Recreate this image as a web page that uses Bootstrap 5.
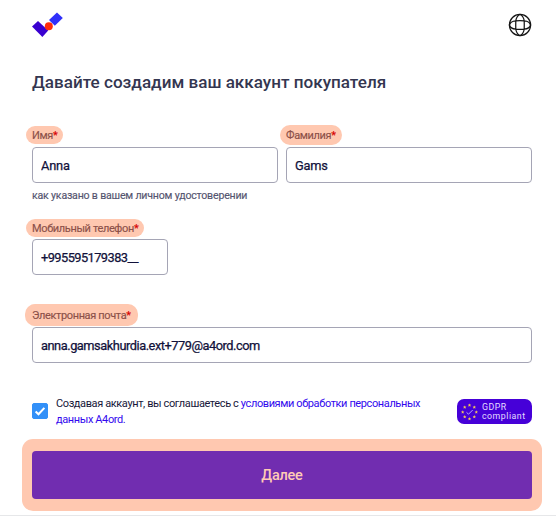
<!DOCTYPE html>
<html lang="ru">
<head>
<meta charset="utf-8">
<meta name="viewport" content="width=device-width, initial-scale=1">
<title>A4ord</title>
<link href="https://cdn.jsdelivr.net/npm/bootstrap@5.3.0/dist/css/bootstrap.min.css" rel="stylesheet">
<style>
body{font-family:Roboto,"Liberation Sans",sans-serif;background:#fff;color:#17173a;overflow:hidden}
.page{height:516px;padding:0 24px 0 32px;border-bottom:1px solid #e6e7e9}
.top{height:50px;padding-top:12px}
.logo{display:block}
.title{font-size:17.1px;line-height:24px;font-weight:500;color:#343650;margin:20px 0 32px;white-space:nowrap}
.tag{display:block;width:max-content;font-size:11px;font-weight:400;letter-spacing:-.36px;line-height:20px;height:18px;padding:0 6px;margin:0 0 3px -6px;border-radius:10px;background:#ffc8b0;color:#8c5049;-webkit-text-stroke:.15px;white-space:nowrap}
.tag i{font-style:normal;color:#d80000}
.tag-last{height:20px;line-height:22px;margin-top:-1px;margin-bottom:2px}
.tag-phone{margin-bottom:2px}
.tag-mail{height:22px;line-height:24px;margin:0 0 1px -7px;padding:0 7px}
.field.form-control{height:36px;padding:0 8px;font-size:12.8px;font-weight:400;letter-spacing:-.46px;-webkit-text-stroke:.25px;color:#11113a;border:1px solid #a5a5b5;border-radius:4px}
.field.form-control.given{letter-spacing:-.2px}
.fields{display:grid;grid-template-columns:246px 246px;gap:8px}
.hint{font-size:10.6px;line-height:16px;color:#555570;font-weight:400;letter-spacing:-.2px;-webkit-text-stroke:.15px;margin:5px 0 15px;white-space:nowrap}
.field.phone.form-control{width:136px;margin-bottom:29px;letter-spacing:-.55px}
.agree{height:40px;margin:32px 0 4px}
.agree .form-check-input{width:16px;height:16px;margin:8px 8px 0 0;border-radius:2px;flex:none}
.agree .form-check-input:checked{background-color:#3290f8;border-color:#3290f8;background-image:url("data:image/svg+xml,%3csvg xmlns='http://www.w3.org/2000/svg' viewBox='0 0 16 16'%3e%3cpath fill='none' stroke='%23fff' stroke-width='2.3' d='M3 8.5l3.3 3.2L13 4.5'/%3e%3c/svg%3e")}
.terms{font-size:11px;line-height:16px;letter-spacing:-.39px;padding-top:1px;white-space:nowrap}
.terms a{color:#3208ee;text-decoration:none}
.gdpr{width:75px;height:25px;margin-top:4px;padding-left:4px;gap:4px;border-radius:7px;background:#4600d8;color:#e4dcff;font-size:8.8px;letter-spacing:.5px}
.gdpr span{display:block;line-height:9px}
.cta{margin:0 -10px;padding:12px 10px;height:72px;width:520px;border-radius:11px;background:#ffc8b0}
.cta .btn{height:48px;border:0;border-radius:4px;background:#712db0;color:#ffcbb5;font-size:14.5px;font-weight:500;letter-spacing:-.25px;padding-top:7px}
.form-area{width:500px}
</style>
<script src="https://cdn.jsdelivr.net/npm/bootstrap@5.3.0/dist/js/bootstrap.bundle.min.js"></script>
</head>
<body>
<main class="page">
<header class="top d-flex justify-content-between align-items-start">
<svg class="logo" width="32" height="26" viewBox="0 0 32 26"><path d="M0 14.4 6 9l10.2 9.6-5.8 6.4z" fill="#3900d0"/><path d="m17 8 8-7.500 5.800 5.400-8 7.800z" fill="#3030fa"/><circle cx="16.8" cy="14.2" r="4" fill="#ff2d0a"/></svg>
<svg width="24" height="26" viewBox="0 0 24 26" fill="none" stroke="#151515" stroke-width="1.25"><circle cx="12" cy="13" r="10.6"/><path d="M12 2.400C9.700 3 8 6.500 7.800 9c-.1 3-.1 5.200 0 8 .2 2.500 1.900 6 4.200 6.600 2.300-.6 4-4.100 4.200-6.600.1-2.800.1-5 0-8C16 6.500 14.300 3 12 2.400zM1.400 13c.6-2.300 3.600-4 6.400-4.200 3-.1 5.400-.1 8.400 0 2.800.2 5.800 1.900 6.400 4.200-.6 2.300-3.600 4-6.400 4.200-3 .1-5.400.1-8.400 0C5 17 2 15.300 1.400 13z"/></svg>
</header>
<div class="form-area">
<h1 class="title">Давайте создадим ваш аккаунт покупателя</h1>
<form onsubmit="return false">
<div class="fields">
<div><label class="tag" for="fn">Имя<i>*</i></label><input id="fn" class="form-control field given" value="Anna"></div>
<div><label class="tag tag-last" for="ln">Фамилия<i>*</i></label><input id="ln" class="form-control field given" value="Gams"></div>
</div>
<p class="hint">как указано в вашем личном удостоверении</p>
<label class="tag tag-phone" for="ph">Мобильный телефон<i>*</i></label>
<input id="ph" class="form-control field phone" value="+995595179383__">
<label class="tag tag-mail" for="em">Электронная почта<i>*</i></label>
<input id="em" class="form-control field" value="anna.gamsakhurdia.ext+779@a4ord.com">
<div class="agree d-flex">
<input id="ok" class="form-check-input" type="checkbox" checked aria-label="Согласие">
<div class="terms">Создавая аккаунт, вы соглашаетесь с <a href="#">условиями обработки персональных<br>данных A4ord.</a></div>
<div class="gdpr d-flex align-items-center ms-auto">
<svg width="17" height="18" viewBox="-8.500 -9 17 18" fill="#f0c45a"><defs><path id="st" d="M0-1.800.5-.6 1.700-.5.8.3 1.100 1.500 0 .9-1.100 1.500-.8.3-1.700-.5-.5-.6z"/></defs><use href="#st" y="-6.800"/><use href="#st" x="4.800" y="-4.800"/><use href="#st" x="6.800"/><use href="#st" x="4.800" y="4.800"/><use href="#st" y="6.800"/><use href="#st" x="-4.800" y="4.800"/><use href="#st" x="-6.800"/><use href="#st" x="-4.800" y="-4.800"/><path d="M-3 .3-1 2.200 3.200-2" fill="none" stroke="#b9a5ff"/></svg>
<div><span>GDPR</span><span>compliant</span></div>
</div>
</div>
<div class="cta"><button class="btn w-100">Далее</button></div>
</form>
</div>
</main>
</body>
</html>
